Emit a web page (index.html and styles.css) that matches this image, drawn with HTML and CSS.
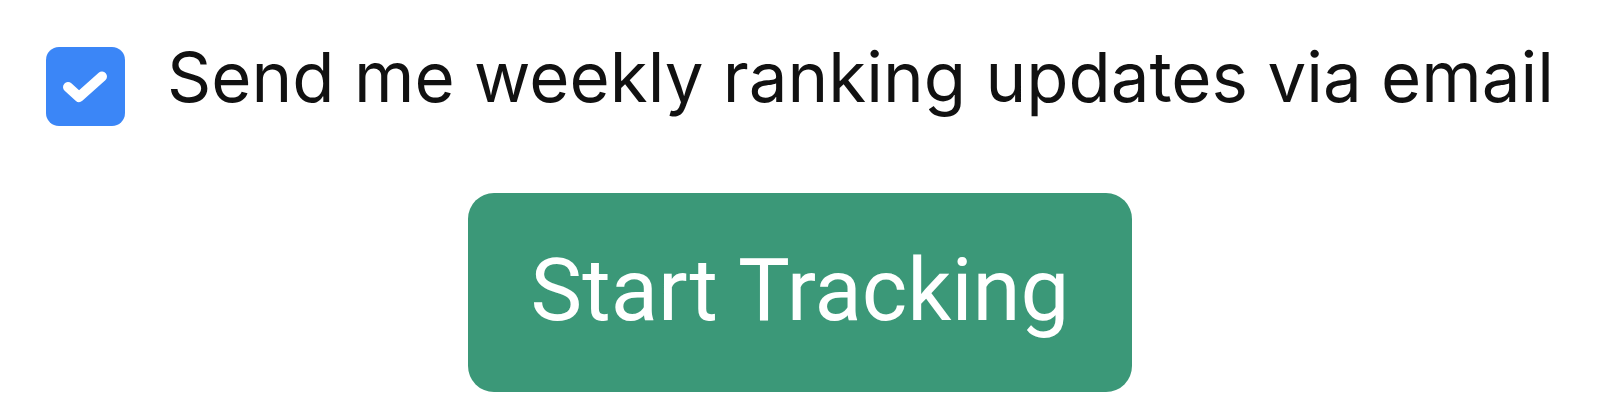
FILE: index.html
```html
<!DOCTYPE html>
<html>
  <head>
    <title>Rank Tracker</title>
    <meta name="viewport" content="width=device-width, initial-scale=1.0">
    <link rel="stylesheet" href="styles.css">
  </head>
  <body>
    <div class="signup">
      <label class="opt-row">
        <span class="check-box">
          <svg viewBox="0 0 79 79" width="79" height="79">
            <path d="M22 40L33 50L56 29.5" fill="none" stroke="white" stroke-width="10" stroke-linecap="round" stroke-linejoin="round"/>
          </svg>
        </span>
        <span class="opt-text">Send me weekly ranking updates via email</span>
      </label>

      <button class="start-button">Start Tracking</button>
    </div>
  </body>
</html>
```

FILE: styles.css
```css
body{
  margin: 0;
  background-color: white;
  font-family: Inter, "Noto Sans", sans-serif;
}

.signup{
  display: flex;
  flex-direction: column;
  align-items: center;
  padding-top: 47px;
}

.opt-row{
  display: flex;
  align-items: flex-start;
  gap: 42px;
  cursor: pointer;
}

.check-box{
  width: 79px;
  height: 79px;
  border-radius: 13px;
  background-color: #3b86f7;
}

.check-box svg{
  display: block;
}

.opt-text{
  margin-top: -9px;
  font-size: 69px;
  line-height: 79px;
  color: #111111;
}

.start-button{
  margin-top: 67px;
  width: 664px;
  height: 199px;
  padding-bottom: 6px;
  border: none;
  border-radius: 26px;
  background-color: #3b9878;
  color: white;
  font-family: Roboto, sans-serif;
  font-size: 87px;
  cursor: pointer;
}
```
